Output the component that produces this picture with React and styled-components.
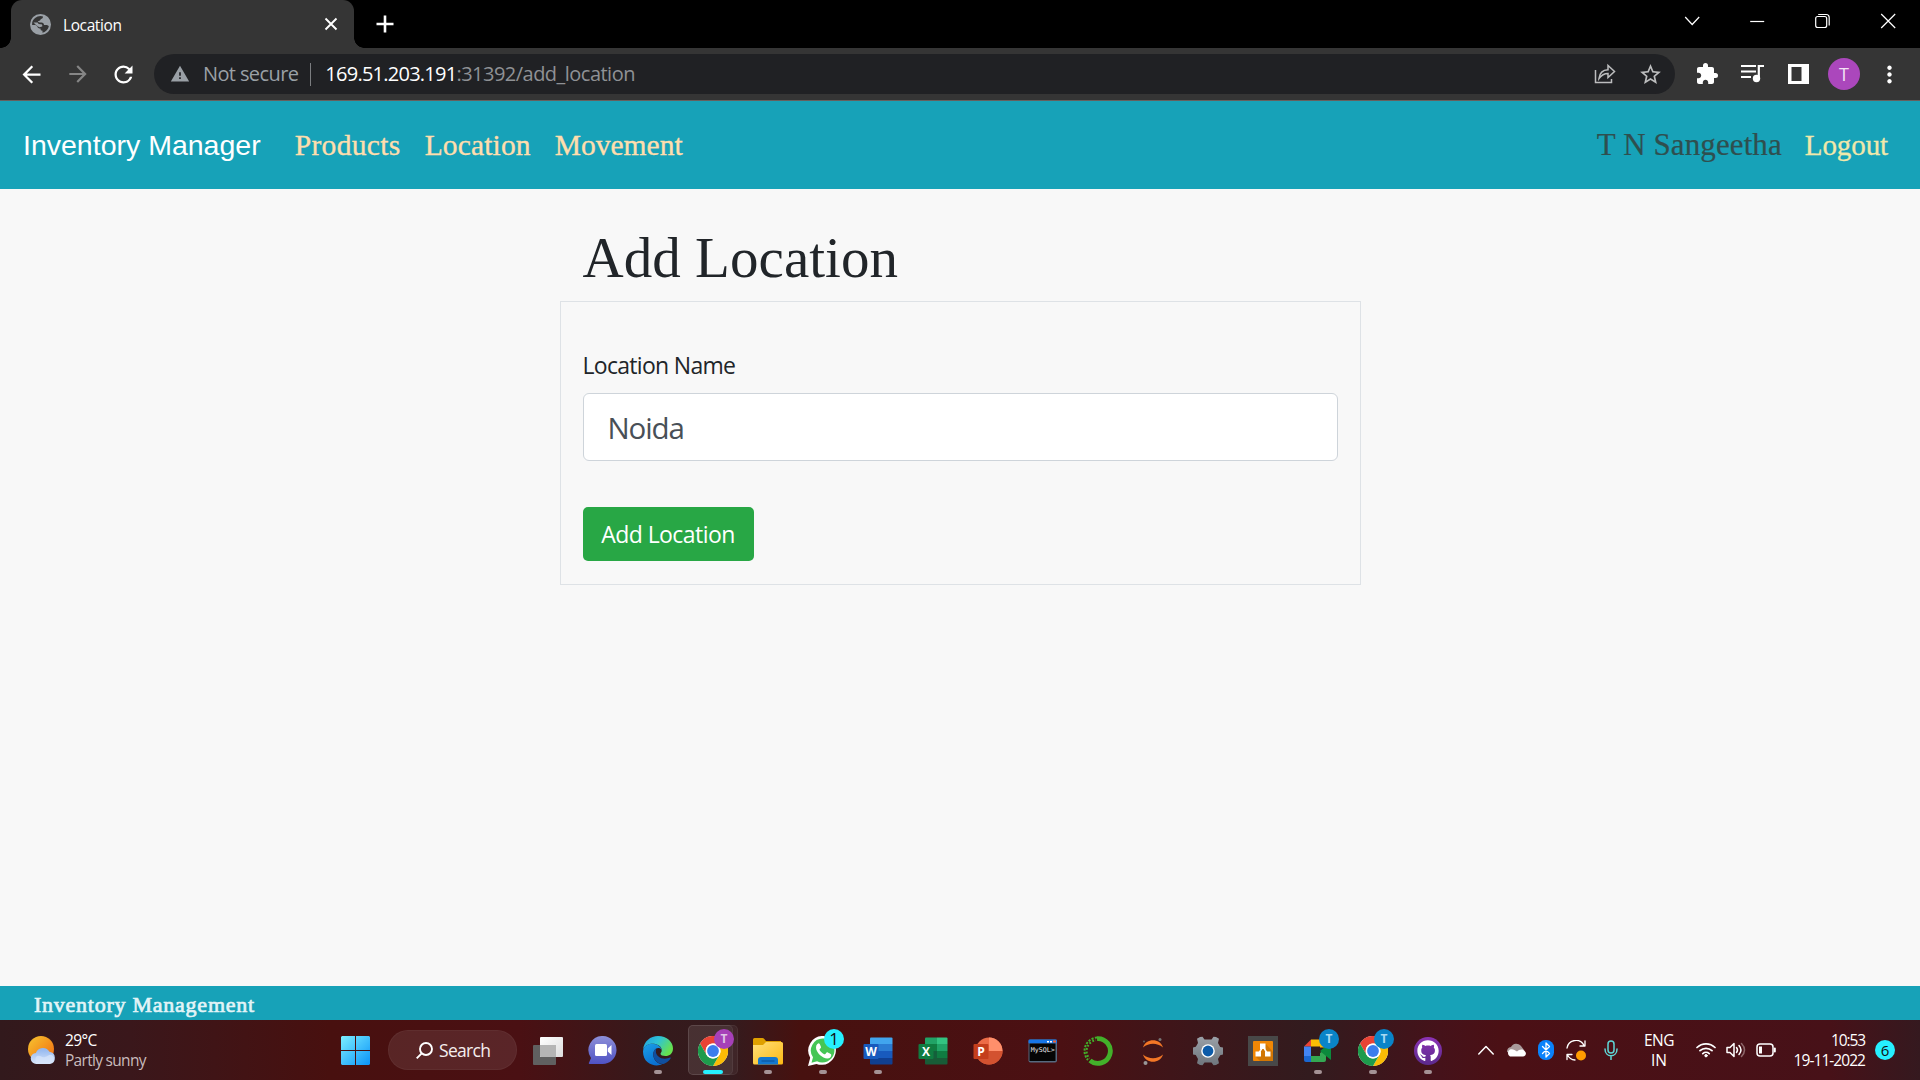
import React from 'react';
import styled, { createGlobalStyle, css } from 'styled-components';
import {
  MdArrowBack, MdArrowForward, MdRefresh, MdWarning,
  MdStarBorder, MdExtension, MdMoreVert,
} from 'react-icons/md';
import { FaGithub } from 'react-icons/fa';

const ui = '"Open Sans", "Noto Sans", sans-serif';
const serif = '"Liberation Serif", "Times New Roman", serif';

const GlobalStyle = createGlobalStyle`
  *, *::before, *::after { box-sizing: border-box; }
  body { margin: 0; background: #f8f8f8; overflow: hidden; }
  svg { display: block; flex: none; }
`;

const Screen = styled.div`
  width: 1920px;
  height: 1080px;
  display: flex;
  flex-direction: column;
  font-family: ${ui};
  overflow: hidden;
`;

const Text = styled.span`
  display: block;
  flex: none;
  white-space: nowrap;
  font-family: ${p => p.$font || ui};
  font-size: ${p => p.$size}px;
  font-weight: ${p => p.$weight || 400};
  letter-spacing: ${p => p.$track || 0}px;
  line-height: ${p => p.$line || 24}px;
  color: ${p => p.$color || '#fff'};
  -webkit-text-stroke: ${p => p.$stroke || 0}px currentColor;
`;

/* ---------- browser ---------- */

const TitleBar = styled.header`
  height: 48px;
  flex: none;
  display: flex;
  align-items: stretch;
  background: #000;
  padding-left: 11px;
`;

const Tab = styled.div`
  position: relative;
  width: 343px;
  display: flex;
  align-items: center;
  padding: 0 16px 0 19px;
  background: #353535;
  border-radius: 11px 11px 0 0;
  &::before, &::after {
    content: '';
    position: absolute;
    bottom: 0;
    width: 10px;
    height: 10px;
  }
  &::before { left: -10px; background: radial-gradient(circle at 0 0, #000 9.5px, #353535 10px); }
  &::after { right: -10px; background: radial-gradient(circle at 100% 0, #000 9.5px, #353535 10px); }
`;

const TabTitle = styled(Text)`
  margin-left: 12px;
  padding-top: 1px;
  flex: 1;
`;

const NewTab = styled.div`
  width: 62px;
  display: grid;
  place-items: center;
`;

const WindowControls = styled.div`
  margin-left: auto;
  display: flex;
  svg { width: 65.4px; height: 42px; }
`;

const Toolbar = styled.div`
  height: 53px;
  flex: none;
  display: flex;
  align-items: center;
  padding: 0 17px 0 18px;
  background: #353535;
  border-bottom: 1px solid #66605e;
`;

const NavButtons = styled.div`
  width: 136px;
  display: flex;
  gap: 20px;
  svg:last-child { margin-left: -1px; }
`;

const Omnibox = styled.div`
  width: 1522px;
  height: 40px;
  display: flex;
  align-items: center;
  padding: 0 12px 0 16px;
  border-radius: 20px;
  background: #202124;
`;

const Security = styled(Text)`
  margin-left: 13px;
`;

const OmniDivider = styled.div`
  width: 1px;
  height: 23px;
  margin: 0 14px 0 12px;
  background: #7b7d80;
`;

const OmniActions = styled.div`
  margin-left: auto;
  display: flex;
  align-items: center;
  gap: 22px;
`;

const ToolbarActions = styled.div`
  margin-left: 20px;
  display: flex;
  align-items: center;
`;

const QueueMusic = styled.svg`
  margin: 0 24px 0 22px;
`;

const Avatar = styled.div`
  width: 32px;
  height: 32px;
  margin: 0 16px 0 19px;
  border-radius: 50%;
  display: grid;
  place-items: center;
  background: #ab47bc;
`;

/* ---------- page ---------- */

const NavBar = styled.nav`
  height: 88px;
  flex: none;
  display: flex;
  align-items: center;
  padding: 0 32px 0 23px;
  background: #17a2b8;
`;

const NavLinks = styled.div`
  display: flex;
  gap: 24px;
  margin-left: 34px;
`;

const Account = styled.div`
  display: flex;
  gap: 23px;
  margin-left: auto;
`;

const Main = styled.main`
  flex: 1;
  width: 801px;
  margin: 0 auto;
  padding-top: 34px;
`;

const Heading = styled.h1`
  margin: 0 0 0 23px;
  height: 78px;
  font: 400 57px/70px ${serif};
  letter-spacing: 0.05px;
  color: #212529;
`;

const Form = styled.form`
  height: 284px;
  padding: 47px 22px 0;
  border: 1px solid #dee2e6;
`;

const Input = styled.input`
  display: block;
  width: 100%;
  height: 68px;
  margin: 12px 0 46px;
  padding: 1px 24px 0;
  border: 1px solid #ced4da;
  border-radius: 6px;
  background: #fff;
  color: #495057;
  font: 400 29.500px ${ui};
  letter-spacing: -1.1px;
  outline: 0;
`;

const SubmitButton = styled.button`
  width: 171px;
  height: 54px;
  padding: 0;
  border: 0;
  border-radius: 5px;
  background: #28a745;
  color: #fff;
  font: 400 23px ${ui};
  letter-spacing: -0.55px;
  white-space: nowrap;
`;

const Footer = styled.footer`
  height: 34px;
  flex: none;
  display: flex;
  align-items: center;
  padding: 4px 0 0 34px;
  background: #17a2b8;
`;

/* ---------- taskbar ---------- */

const TaskbarRoot = styled.div`
  height: 60px;
  flex: none;
  display: flex;
  align-items: center;
  background: linear-gradient(90deg, #32191c 0, #3a171b 130px, #48100f 330px, #4a1013 520px, #351a1c 660px, #341b1e 730px,
    #47110f 800px, #4b1013 1060px, #3d161a 1190px, #321b1e 1310px, #45121a 1440px, #4b1015 1500px, #471118 1830px, #35191f 1920px);
`;

const Weather = styled.div`
  width: 328px;
  display: flex;
  align-items: center;
  gap: 8px;
  padding-left: 27px;
`;

const Search = styled.div`
  width: 129px;
  height: 40px;
  margin: 0 3px 0 5px;
  padding-left: 27px;
  display: flex;
  align-items: center;
  gap: 6px;
  border-radius: 20px;
  background: rgba(255, 255, 255, 0.09);
  border: 1px solid rgba(255, 255, 255, 0.04);
`;

const Slot = styled.div`
  position: relative;
  width: 55px;
  height: 60px;
  flex: none;
  display: grid;
  place-items: center;
  padding-top: 1px;
  ${p => p.$active && css`
    &::before, &::after {
      content: '';
      position: absolute;
      left: 3px;
      top: 5px;
      height: 50px;
      border-radius: 5px;
      background: rgba(255, 255, 255, 0.05);
      border: 1px solid rgba(255, 255, 255, 0.06);
    }
    &::before { width: 50px; }
    &::after { width: 45px; }
  `}
  > svg { position: relative; z-index: 1; }
`;

const Running = styled.i`
  position: absolute;
  z-index: 2;
  bottom: 6px;
  left: 50%;
  transform: translateX(-50%);
  width: ${p => (p.$active ? 20 : 8)}px;
  height: 4px;
  border-radius: 2px;
  background: ${p => (p.$active ? '#26f0ff' : '#a49295')};
`;

const Badge = styled.span`
  position: absolute;
  z-index: 2;
  top: 9px;
  left: 29px;
  width: 20px;
  height: 20px;
  border-radius: 50%;
  text-align: center;
  background: ${p => p.$bg};
  color: ${p => p.$fg};
  font: ${p => p.$weight || 700} ${p => p.$size || 12}px/20px ${ui};
`;

const Tray = styled.div`
  margin-left: auto;
  display: flex;
  align-items: center;
  padding-right: 25px;
`;

const Stack = styled.div`
  width: ${p => p.$w}px;
  display: flex;
  flex-direction: column;
  align-items: ${p => p.$align || 'flex-start'};
`;

const CountBadge = styled.span`
  width: 20px;
  height: 20px;
  margin-left: 10px;
  border-radius: 50%;
  text-align: center;
  background: #26f0ff;
  color: #111;
  font: 400 15px/21px ${ui};
`;

/* ---------- icons ---------- */

const Ico = ({ w = 30, h = w, box, children, ...rest }) => (
  <svg width={w} height={h} viewBox={box || `0 0 ${w} ${h}`} fill="none" {...rest}>{children}</svg>
);

const GlobeIcon = () => (
  <Ico w={21}>
    <circle cx="10.500" cy="10.500" r="10.500" fill="#9aa0a6" />
    <path fill="#353535" d="M2.200 8.500C3 5 6.500 2.200 10.500 2c1 0 2 .2 2.500.5 0 1.500-.8 2.300-2.200 2.500C10.500 6.500 9.500 7 8 7c0 1.500 1 1.500 3.500 1.500 1.500 0 2.500 1 2.500 2.500h2c1.500 0 2.500.5 2.800 1.500-.8 3.200-3.300 5.700-6.300 6.300v-2c-1.500 0-2-1-2-2.300C9 14.500 7.500 14 7.500 12.500L5.500 11H2.100z" />
    <path fill="#9aa0a6" d="M3.500 8.500h4.200c.3 1.500 2 1.600 3.500 1.800 1.200.2 1.300 1.700 1 2.200l-2.700.7c-1 0-1.500-1.200-3-1.700z" />
  </Ico>
);

const ShareIcon = () => (
  <Ico w={22} stroke="#bcbdbe" strokeWidth="1.500">
    <path d="M1.500 7v12.500h16V16" />
    <path d="M5 15.500c.6-5.500 4-8.500 9-8.700V2.500l6.500 6-6.500 6v-4c-4 0-6.500 1.500-9 5z" />
  </Ico>
);

const SidePanelIcon = () => (
  <Ico w={21} h={20}><path fill="#fff" fillRule="evenodd" d="M0 0h21v20H0zM3.500 3h10v14h-10z" /></Ico>
);

const WeatherIcon = () => (
  <Ico w={30} h={30}>
    <defs>
      <linearGradient id="sun" x1="0" y1="0" x2="1" y2="1"><stop stopColor="#f7c530" /><stop offset="1" stopColor="#f0680f" /></linearGradient>
      <linearGradient id="cloud" x1="0" y1="0" x2="0" y2="1"><stop stopColor="#8fb4ee" /><stop offset="1" stopColor="#d9e7fb" /></linearGradient>
    </defs>
    <circle cx="14" cy="14" r="13" fill="url(#sun)" />
    <path fill="url(#cloud)" d="M9.500 29a5.500 5.500 0 0 1-.6-11 7.500 7.500 0 0 1 13.600-1.200A6.200 6.200 0 0 1 23 29z" />
    <path fill="#d8e6fb" d="M10 28a4.500 4.500 0 0 1 0-7c4-1 5 2 8 1s5-4 8-1a4.500 4.500 0 0 1-2 7z" opacity=".7" />
  </Ico>
);

const StartIcon = () => (
  <Ico w={29}>
    <defs><linearGradient id="win" x1="0" y1="0" x2="1" y2="1" gradientUnits="userSpaceOnUse" gradientTransform="scale(29)"><stop stopColor="#7cefff" /><stop offset="1" stopColor="#0a93f8" /></linearGradient></defs>
    <path fill="url(#win)" d="M1 0h13v14H0V1zM15 0h13l1 1v13H15zM0 15h14v14H1l-1-1zM15 15h14v13l-1 1H15z" />
  </Ico>
);

const TaskViewIcon = () => (
  <Ico w={30} h={28}>
    <defs><linearGradient id="tv" x1="0" y1="0" x2="1" y2="1"><stop stopColor="#fff" /><stop offset="1" stopColor="#ddd" /></linearGradient></defs>
    <rect y="8" width="23" height="20" rx="1" fill="#606060" />
    <rect x="7" width="23" height="20" rx="1" fill="url(#tv)" />
    <path d="M7 8h16v12H8l-1-1z" fill="#b5b5b5" />
  </Ico>
);

const ChatIcon = () => (
  <Ico w={30} h={29}>
    <defs><linearGradient id="chat" x1="0" y1="0" x2="0" y2="1"><stop stopColor="#8d8fd8" /><stop offset="1" stopColor="#4f52c4" /></linearGradient></defs>
    <path fill="url(#chat)" d="M15 0a14 14 0 1 1-1 28H1.500c-.8 0-.9-.9-.4-1.400L3 22A14 14 0 0 1 15 0z" />
    <rect x="7" y="8" width="12" height="12" rx="1.500" fill="#fff" />
    <path d="M19.800 12.500 23.500 9v10l-3.700-3.500z" fill="#fff" />
  </Ico>
);

const EdgeIcon = () => (
  <Ico w={30}>
    <defs>
      <linearGradient id="e1" x1="0" y1="0" x2="1" y2=".5"><stop stopColor="#1f9de0" /><stop offset=".5" stopColor="#2fc3d6" /><stop offset="1" stopColor="#66e14f" /></linearGradient>
      <linearGradient id="e2" x1="0" y1="0" x2=".5" y2="1"><stop stopColor="#1ba0e8" /><stop offset="1" stopColor="#0a6fd0" /></linearGradient>
    </defs>
    <path fill="url(#e1)" d="M0 14C1 5 7.500 0 15 0c9 0 15 6 15 12.500 0 5-3.500 7.500-7.500 7.500-3 0-5-1-5-2.300 0-.8 1.200-1.200 1.200-3.200C18.700 10 14 7.800 9.500 7.800 5 7.800 1.500 10 0 14z" />
    <path fill="url(#e2)" d="M0 15.500C.5 9.800 5 7.800 9 7.800c5.500 0 9 3 9.500 6-.6-1.200-2-1.800-3.200-1.800-3 0-5 3-5 6.500 0 6 5 9.500 9 9.800C12 31.500 0 28 0 15.500z" />
    <path fill="#104f9f" d="M13.500 12.300c-2 1-3.200 3.200-3.200 6 0 6 5.200 10.200 10.200 9.700 3-1 5.500-3 7.200-5.700.3-.6-.2-1-.8-.7-1.500.8-3 1.100-5 1.100-5 0-9-3.200-9-7.200 0-1.300.2-2.300.6-3.200z" />
  </Ico>
);

const ChromeIcon = () => (
  <Ico w={30} box="-15 -15 30 30">
    <circle r="15" fill="#fff" />
    <path fill="#ea4335" d="M-13-7.500A15 15 0 0 1 13-7.500H0A7.500 7.500 0 0 0-6.500-3.750L-7 3z" />
    <path fill="#fbbc05" d="M13-7.500A15 15 0 0 1 0 15L6.500 3.750A7.500 7.500 0 0 0 6.500-3.750 7.500 7.500 0 0 0 0-7.500z" />
    <path fill="#1e9b4c" d="M0 15A15 15 0 0 1-13-7.500L-6.500 3.750A7.500 7.500 0 0 0 6.500 3.750z" />
    <circle r="7.500" fill="#fff" /><circle r="5.900" fill="#3b7ded" />
  </Ico>
);

const FolderIcon = () => (
  <Ico w={30} h={28}>
    <defs><linearGradient id="fd" x1="0" y1="0" x2="1" y2="1"><stop stopColor="#ffe07a" /><stop offset="1" stopColor="#fdb913" /></linearGradient></defs>
    <path fill="#dfa000" d="M0 2.500Q0 1 1.500 1h8q1 0 1.800 1l1.700 2H28v6H0z" />
    <path fill="url(#fd)" d="M0 8h10l3-3h15.500Q30 5 30 6.500V26q0 1.500-1.500 1.500h-27Q0 27.500 0 26z" />
    <path fill="#1478cf" d="M5 27.500V23q0-3 3-3h14q3 0 3 3v4.500z" /><path stroke="#0b4f94" d="M8.500 24h13" />
  </Ico>
);

const WhatsAppIcon = () => (
  <Ico w={30}>
    <path fill="#fff" d="M15.500 0A14.500 14.500 0 1 1 8.500 28L0 30l2.200-8.300A14.500 14.500 0 0 1 15.500 0z" />
    <path fill="#45c655" d="M15.500 2.500a12 12 0 1 1-6.400 22.700l-5.600 1.500 1.500-5.400A12 12 0 0 1 15.500 2.500z" />
    <path fill="#fff" d="M10.800 7.300c-.7 0-2.800 1.200-2.800 4.200 0 5 6.500 11 11.300 11 2.600 0 4-1.800 4-3.800 0-.5-3.600-2.400-4.200-2.400-.8 0-1.400 2-2.300 2-1.300 0-5-3-5.300-4.800 0-.8 1.500-1.200 1.500-2.200 0-.6-1.300-4-2.200-4z" />
  </Ico>
);

const Letter = styled.text`
  font: 700 ${p => p.$size || 12}px ${ui};
  text-anchor: middle;
  fill: #fff;
`;

const OfficeIcon = ({ letter, tile, bands }) => (
  <Ico w={30} h={28}>
    <clipPath id={`c${letter}`}><rect x="7" y="0.500" width="22.500" height="27" rx="1" /></clipPath>
    <g clipPath={`url(#c${letter})`}>
      {bands.map(([x, y, w, h, c], i) => <rect key={i} x={x} y={y} width={w} height={h} fill={c} />)}
    </g>
    <rect x="0.500" y="7" width="15" height="15" rx="1" fill={tile} />
    <Letter x="8" y="18.800">{letter}</Letter>
  </Ico>
);

const PowerPointIcon = () => (
  <Ico w={30} h={28}>
    <circle cx="16" cy="14" r="13.500" fill="#ed6c47" />
    <path fill="#ff8f6b" d="M16 .5A13.500 13.500 0 0 1 29.500 14H16z" />
    <path fill="#d35230" d="M2.500 14h27a13.500 13.500 0 0 1-27 0z" />
    <rect x="0.500" y="7" width="15" height="15" rx="1" fill="#c43e1c" />
    <Letter x="8" y="18.800">P</Letter>
  </Ico>
);

const MySqlIcon = () => (
  <Ico w={30} h={24}>
    <rect x="0.500" y="0.500" width="28.500" height="23" rx="2" fill="#56697f" />
    <rect x="0.500" y="0.500" width="28.500" height="4" rx="1" fill="#1676e8" />
    <path fill="#fff" d="M19 2h2v1.500h-2zM22 2h2v1.500h-2z" /><path fill="#f06030" d="M25 1.500h3v2h-3z" />
    <rect x="1.500" y="4.500" width="26" height="17.500" fill="#050505" />
    <text x="2.800" y="12.500" fill="#eee" fontSize="6.500" fontFamily="DejaVu Sans Mono, monospace" textLength="24" lengthAdjust="spacingAndGlyphs">MySQL&gt;</text>
  </Ico>
);

const AnacondaIcon = () => (
  <Ico w={30} stroke="#43b02a">
    <path d="M14 2.600A12.400 12.400 0 1 1 7 24.500" strokeWidth="4.800" />
    <path d="M14 1.500A13.500 13.500 0 0 0 5 24" strokeWidth="2" strokeDasharray="2.200 1.300" />
    <path d="M13 4.200A11 11 0 0 0 6.500 22.500" strokeWidth="2" strokeDasharray="1.800 1.700" strokeDashoffset="1.500" />
  </Ico>
);

const JupyterIcon = () => (
  <Ico w={22} h={28}>
    <path fill="#f37726" d="M1 10.500C4 .8 18 .8 21 10.500 15 5.500 7 5.500 1 10.500zM1 17.500c3 9.700 17 9.700 20 0-6 5-14 5-20 0z" />
    <circle cx="18" cy="2.500" r="1.500" fill="#767677" /><circle cx="3.500" cy="26" r="2" fill="#989798" /><circle cx="2" cy="4.500" r="1" fill="#616262" />
  </Ico>
);

const SettingsIcon = () => (
  <Ico w={30} box="-15 -15 30 30">
    <defs><linearGradient id="st" x1="0" y1="0" x2="0" y2="1"><stop stopColor="#9aa0a7" /><stop offset="1" stopColor="#6e757c" /></linearGradient></defs>
    <path fill="url(#st)" d="M-8-14l2.500-.3 2 2.800h7l2-2.800L8-14 11-12.200 10-8l2.200 3.900 2.800.6v7l-2.800.8L10 8l1 4.200L8 14l-2.500.3-2-2.800h-7l-2 2.800L-8 14l-3-1.800L-10 8l-2.200-3.900-2.800-.6v-7l2.800-.8L-10-8l-1-4.200z" />
    <circle r="6.800" fill="#fff" /><circle r="5.400" fill="#0c5ba8" />
  </Ico>
);

const DrawIoIcon = () => (
  <Ico w={30}>
    <rect width="30" height="30" fill="#484848" /><rect x="5" y="5" width="20" height="20" rx="1" fill="#f08705" />
    <path fill="#d17605" d="m18 8 7 8v9H12l-4-4z" />
    <path stroke="#fff" strokeWidth="1.500" d="m14 12-3.500 6m5.500-6 3.500 6" />
    <path fill="#fff" d="M12 7.500h5.500V13H12zM7.500 15.500h5.500V20.500H7.500zM17 15.500h5.500V20.500H17z" />
  </Ico>
);

const MeetIcon = () => (
  <Ico w={30} h={26}>
    <path fill="#ea4335" d="M1 8.500 8 1.500v7z" /><path fill="#fbbc04" d="M8 1.500h13q2 0 2 2v6h-6v-1H8z" />
    <path fill="#4285f4" d="M1 8.500h7V18H1z" /><path fill="#1a67d2" d="M1 18h7v6H3q-2 0-2-2z" />
    <path fill="#34a853" d="M8 18h9v-3l6-4v11q0 2-2 2H8z" /><path fill="#0b8a3c" d="M17 13 28 4v18l-5-4z" />
  </Ico>
);

const GithubTile = styled.div`
  width: 28px;
  height: 28px;
  border-radius: 50%;
  display: grid;
  place-items: center;
  background: linear-gradient(#8c33b5, #5b2a8c);
`;

const TrayIcon = styled.svg`
  margin-left: ${p => p.$gap}px;
  fill: none;
  stroke: #fff;
  stroke-width: 1.5;
  stroke-linecap: round;
  stroke-linejoin: round;
`;

const wordBands = [[7, 0, 23, 7, '#41a5ee'], [7, 7, 23, 7, '#2b7cd3'], [7, 14, 23, 7, '#185abd'], [7, 21, 23, 7, '#103f91']];
const excelBands = [[7, 0, 12, 7, '#21a366'], [19, 0, 11, 7, '#33c481'], [7, 7, 12, 7, '#107c41'], [19, 7, 11, 7, '#21a366'], [7, 14, 12, 7, '#14603b'], [19, 14, 11, 7, '#107c41'], [7, 21, 23, 7, '#185c37']];

const profile = <Badge $bg="#0a84c8" $fg="#a8d9f2">T</Badge>;

const apps = [
  { id: 'taskview', icon: <TaskViewIcon /> },
  { id: 'chat', icon: <ChatIcon /> },
  { id: 'edge', icon: <EdgeIcon />, running: true },
  { id: 'chrome', icon: <ChromeIcon />, running: true, active: true, badge: <Badge $bg="#a640b8" $fg="#dfc3e5">T</Badge> },
  { id: 'explorer', icon: <FolderIcon />, running: true },
  { id: 'whatsapp', icon: <WhatsAppIcon />, running: true, badge: <Badge $bg="#26f0ff" $fg="#111" $size={17} $weight={400}>1</Badge> },
  { id: 'word', icon: <OfficeIcon letter="W" tile="#185abd" bands={wordBands} />, running: true },
  { id: 'excel', icon: <OfficeIcon letter="X" tile="#107c41" bands={excelBands} /> },
  { id: 'powerpoint', icon: <PowerPointIcon /> },
  { id: 'mysql', icon: <MySqlIcon /> },
  { id: 'anaconda', icon: <AnacondaIcon /> },
  { id: 'jupyter', icon: <JupyterIcon /> },
  { id: 'settings', icon: <SettingsIcon /> },
  { id: 'drawio', icon: <DrawIoIcon /> },
  { id: 'meet', icon: <MeetIcon />, running: true, badge: profile },
  { id: 'chrome2', icon: <ChromeIcon />, running: true, badge: profile },
  { id: 'github', icon: <GithubTile><FaGithub size={22} color="#fff" /></GithubTile>, running: true },
];

function Browser() {
  return (
    <>
      <TitleBar>
        <Tab>
          <GlobeIcon />
          <TabTitle $size={15.500} $track={-0.4}>Location</TabTitle>
          <Ico w={14} stroke="#fff" strokeWidth="1.900"><path d="m1.500 1.500 11 11m0-11-11 11" /></Ico>
        </Tab>
        <NewTab><Ico w={18} stroke="#fff" strokeWidth="2.600"><path d="M9 .5v17M.5 9h17" /></Ico></NewTab>
        <WindowControls>
          <Ico w={65} h={42} stroke="#fff" strokeWidth="1.200"><path d="m27 17 7 7.500 7-7.500" /></Ico>
          <Ico w={65} h={42} stroke="#fff" strokeWidth="1.200"><path d="M26 21.500h14" /></Ico>
          <Ico w={65} h={42} stroke="#fff" strokeWidth="1.200"><rect x="26.500" y="16.500" width="11" height="11" rx="2" /><path d="M29 14.500h8q3 0 3 3v8" /></Ico>
          <Ico w={65} h={42} stroke="#fff" strokeWidth="1.200"><path d="m26 14 14 14m0-14-14 14" /></Ico>
        </WindowControls>
      </TitleBar>
      <Toolbar>
        <NavButtons>
          <MdArrowBack size={27} color="#fff" />
          <MdArrowForward size={26} color="#868686" />
          <MdRefresh size={27} color="#fff" />
        </NavButtons>
        <Omnibox>
          <MdWarning size={20} color="#9aa0a6" />
          <Security $size={20} $track={-0.6} $color="#9aa0a6">Not secure</Security>
          <OmniDivider />
          <Text $size={20} $track={-0.75}>169.51.203.191</Text>
          <Text $size={20} $track={-0.52} $color="#8f9195">:31392/add_location</Text>
          <OmniActions><ShareIcon /><MdStarBorder size={25} color="#bcbdbe" /></OmniActions>
        </Omnibox>
        <ToolbarActions>
          <MdExtension size={24} color="#fff" />
          <QueueMusic width="23" height="20" viewBox="0 0 23 20" fill="none">
            <path stroke="#fff" strokeWidth="2.200" d="M0 2h15M0 7.500h15M0 13h10M17.800 15V2H23" /><circle cx="15.500" cy="14.500" r="3.700" fill="#fff" />
          </QueueMusic>
          <SidePanelIcon />
          <Avatar><Text $size={18} $line={20} $color="#f3e3f5">T</Text></Avatar>
          <MdMoreVert size={27} color="#fff" />
        </ToolbarActions>
      </Toolbar>
    </>
  );
}

function Page() {
  return (
    <>
      <NavBar>
        <Text $font='"Liberation Sans", Arial, sans-serif' $size={28.500} $line={40}>Inventory Manager</Text>
        <NavLinks>
          {[['Products', 0.35], ['Location', 0.15], ['Movement', 0]].map(([label, track]) => (
            <Text key={label} $font={serif} $size={29.500} $line={40} $track={track} $stroke={0.35} $color="#ffdead">{label}</Text>
          ))}
        </NavLinks>
        <Account>
          <Text $font={serif} $size={31} $line={40} $track={0.1} $stroke={0.2} $color="#2f4f4f">T N Sangeetha</Text>
          <Text $font={serif} $size={29} $line={40} $track={-0.1} $stroke={0.3} $color="#f0e8aa">Logout</Text>
        </Account>
      </NavBar>
      <Main>
        <Heading>Add Location</Heading>
        <Form>
          <Text as="label" $size={23} $line={32} $track={-0.7} $color="#212529">Location Name</Text>
          <Input defaultValue="Noida" />
          <SubmitButton type="button">Add Location</SubmitButton>
        </Form>
      </Main>
      <Footer>
        <Text $font={serif} $size={22} $stroke={0.7} $track={0.75} $color="#e3f4f7">Inventory Management</Text>
      </Footer>
    </>
  );
}

function Taskbar() {
  return (
    <TaskbarRoot>
      <Weather>
        <WeatherIcon />
        <Stack $w={120}>
          <Text $size={15.500} $line={20} $track={-0.6}>29°C</Text>
          <Text $size={15.500} $line={20} $track={-0.7} $color="#c9bcbd">Partly sunny</Text>
        </Stack>
      </Weather>
      <Slot><StartIcon /></Slot>
      <Search>
        <Ico w={17} stroke="#fff" strokeWidth="1.900"><circle cx="10" cy="7" r="6" /><path d="m5.700 11.300-5 5" /></Ico>
        <Text $size={17.500} $track={-0.7} $line={22} $color="#f5eeee">Search</Text>
      </Search>
      {apps.map(a => (
        <Slot key={a.id} $active={a.active}>
          {a.icon}
          {a.badge}
          {a.running && <Running $active={a.active} />}
        </Slot>
      ))}
      <Tray>
        <TrayIcon width="16" height="10" $gap={0}><path d="m.8 9 7.200-7.500L15.200 9" /></TrayIcon>
        <TrayIcon width="20" height="14" $gap={12}><path stroke="none" fill="#a99a9b" d="M1 9a5 5 0 0 1 4-5 6 6 0 0 1 10-1l3 4-8 5z" /><path stroke="none" fill="#fff" d="M4 13.500a4 4 0 0 1 0-7c3-1 5 1 7 2 2-2 6-3 8 0 2 2 .5 5-2 5z" /></TrayIcon>
        <TrayIcon width="16" height="20" $gap={12}><rect stroke="none" width="16" height="20" rx="7.500" fill="#0a82fa" /><path strokeWidth="1.300" d="m4.500 6.500 7 7L8 17V3l3.500 3.500-7 7" /></TrayIcon>
        <TrayIcon width="21" height="21" $gap={12}><path d="M1 8A9 9 0 0 1 18 5.500M19 1v5h-5M1 19.500V14.500M1 14.500h5M1.500 15A9 9 0 0 0 9 20" strokeWidth="1.300" /><circle cx="15" cy="15.500" r="5" fill="#ff9d00" stroke="none" /></TrayIcon>
        <TrayIcon width="14" height="20" $gap={17}><g stroke="#5fd6d6"><rect x="4" y="1" width="6" height="12" rx="3" /><path d="M1 9c0 9 12 9 12 0M7 16v3.500" /></g></TrayIcon>
        <Stack $w={82} $align="center">
          <Text $size={15.500} $line={20} $track={-0.6}>ENG</Text>
          <Text $size={15.500} $line={20}>IN</Text>
        </Stack>
        <TrayIcon width="20" height="16" $gap={-4}><path strokeWidth="1.700" d="M1 5.500a13 13 0 0 1 18 0M4 8.700a8.700 8.700 0 0 1 12 0M6.800 11.700a4.700 4.700 0 0 1 6.400 0" /><circle cx="10" cy="13.700" r="1.200" fill="#fff" strokeWidth="1" /></TrayIcon>
        <TrayIcon width="20" height="16" $gap={10}><path d="M1 5.500h3l4-4v13l-4-4H1zM10.500 5.500q2 2.500 0 5M13 3.500q4 4.500 0 9" /><path stroke="#8d6669" d="M15.500 1.500q6 6.500 0 13" /></TrayIcon>
        <TrayIcon width="20" height="14" $gap={10}><rect x="1" y="1" width="16" height="12" rx="3" /><rect x="3" y="3.500" width="3" height="7" fill="#fff" stroke="none" /><path d="M18.800 5.500v3" strokeWidth="2" /></TrayIcon>
        <Stack $w={89} $align="flex-end">
          <Text $size={15.500} $line={20} $track={-1.1}>10:53</Text>
          <Text $size={15.500} $line={20} $track={-0.95}>19-11-2022</Text>
        </Stack>
        <CountBadge>6</CountBadge>
      </Tray>
    </TaskbarRoot>
  );
}

export default function App() {
  return (
    <Screen>
      <GlobalStyle />
      <Browser />
      <Page />
      <Taskbar />
    </Screen>
  );
}
